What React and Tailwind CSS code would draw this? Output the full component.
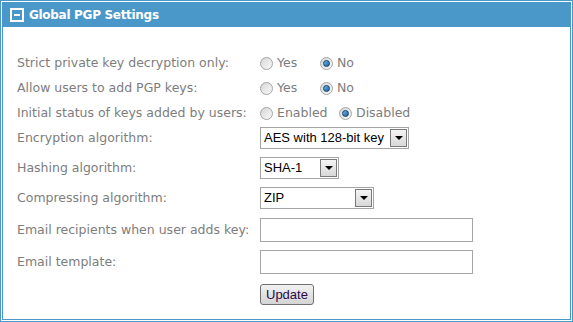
import { useState } from "react";

function Radio({ checked }) {
  return (
    <span className="relative inline-flex h-[13px] w-[13px] items-center justify-center rounded-full border border-[#a4a4a4] bg-gradient-to-br from-[#d6d6d6] to-[#fafafa]">
      {checked && (
        <span className="h-[7px] w-[7px] rounded-full border border-[#0d3f66] bg-gradient-to-br from-[#6fb7ef] to-[#1a5f9c]" />
      )}
    </span>
  );
}

function RadioPair({ options, value, gap }) {
  return (
    <div className="flex items-center">
      {options.map((opt, i) => (
        <label
          key={opt}
          className={"flex items-center gap-[4px] " + (i === 0 ? gap : "")}
        >
          <Radio checked={opt === value} />
          <span>{opt}</span>
        </label>
      ))}
    </div>
  );
}

function FakeSelect({ value, width }) {
  return (
    <div
      className={
        "flex h-[22px] items-center justify-between border border-[#a5a5a5] bg-white pl-[3px] pr-[1px] text-[13px] text-black " +
        width
      }
      style={{ fontFamily: '"Liberation Sans", Arial, sans-serif' }}
    >
      <span>{value}</span>
      <span className="flex h-[18px] w-[17px] items-center justify-center border border-[#7a7a7a] bg-gradient-to-b from-[#f4f4f4] to-[#d8d8d8]">
        <span className="h-0 w-0 border-x-[4px] border-t-[4px] border-x-transparent border-t-black" />
      </span>
    </div>
  );
}

function Row({ label, children, className }) {
  return (
    <div className={"flex items-center " + className}>
      <div className="w-[243px] shrink-0">{label}</div>
      {children}
    </div>
  );
}

export default function App() {
  const [email, setEmail] = useState("");
  const [template, setTemplate] = useState("");

  return (
    <div className="h-[322px] w-[573px] bg-white">
      <div className="h-full w-full border border-[#4a98c9] p-px">
        <div className="flex h-full w-full flex-col border border-[#4a98c9]">
          {/* Header */}
          <div className="flex h-[24px] items-center gap-[5px] bg-[#4a98c9] pl-[7px]">
            <span className="flex h-[14px] w-[14px] items-center justify-center border-2 border-white">
              <span className="h-[2px] w-[6px] bg-white" />
            </span>
            <span
              className="text-[12px] font-bold tracking-[-0.3px] text-white"
              style={{ fontFamily: '"DejaVu Sans", Verdana, sans-serif' }}
            >
              Global PGP Settings
            </span>
          </div>

          {/* Form */}
          <div
            className="flex flex-col pl-[14px] pt-[24px] text-[12.5px] text-[#7d7d7d]"
            style={{ fontFamily: '"DejaVu Sans", Tahoma, sans-serif' }}
          >
            <Row label="Strict private key decryption only:" className="h-[25px]">
              <RadioPair options={["Yes", "No"]} value="No" gap="w-[60px]" />
            </Row>
            <Row label="Allow users to add PGP keys:" className="h-[25px]">
              <RadioPair options={["Yes", "No"]} value="No" gap="w-[60px]" />
            </Row>
            <Row label="Initial status of keys added by users:" className="h-[25px]">
              <RadioPair
                options={["Enabled", "Disabled"]}
                value="Disabled"
                gap="w-[79px]"
              />
            </Row>
            <Row label="Encryption algorithm:" className="mt-[1px] h-[22px]">
              <FakeSelect value="AES with 128-bit key" width="w-[149px]" />
            </Row>
            <Row label="Hashing algorithm:" className="mt-[8px] h-[22px]">
              <FakeSelect value="SHA-1" width="w-[79px]" />
            </Row>
            <Row label="Compressing algorithm:" className="mt-[8px] h-[22px]">
              <FakeSelect value="ZIP" width="w-[114px]" />
            </Row>
            <Row label="Email recipients when user adds key:" className="mt-[9px] h-[24px]">
              <input
                value={email}
                onChange={(e) => setEmail(e.target.value)}
                className="h-[24px] w-[213px] border border-[#a5a5a5] bg-white outline-none"
              />
            </Row>
            <Row label="Email template:" className="mt-[8px] h-[24px]">
              <input
                value={template}
                onChange={(e) => setTemplate(e.target.value)}
                className="h-[24px] w-[213px] border border-[#a5a5a5] bg-white outline-none"
              />
            </Row>
            <Row label="" className="mt-[9px] h-[22px]">
              <button
                className="h-[21px] rounded-[3px] border border-[#707070] bg-gradient-to-b from-[#f2f2f2] to-[#d4d4d4] px-[5px] text-[13px] text-[#2a0a4a]"
                style={{ fontFamily: '"Liberation Sans", Arial, sans-serif' }}
              >
                Update
              </button>
            </Row>
          </div>
        </div>
      </div>
    </div>
  );
}
